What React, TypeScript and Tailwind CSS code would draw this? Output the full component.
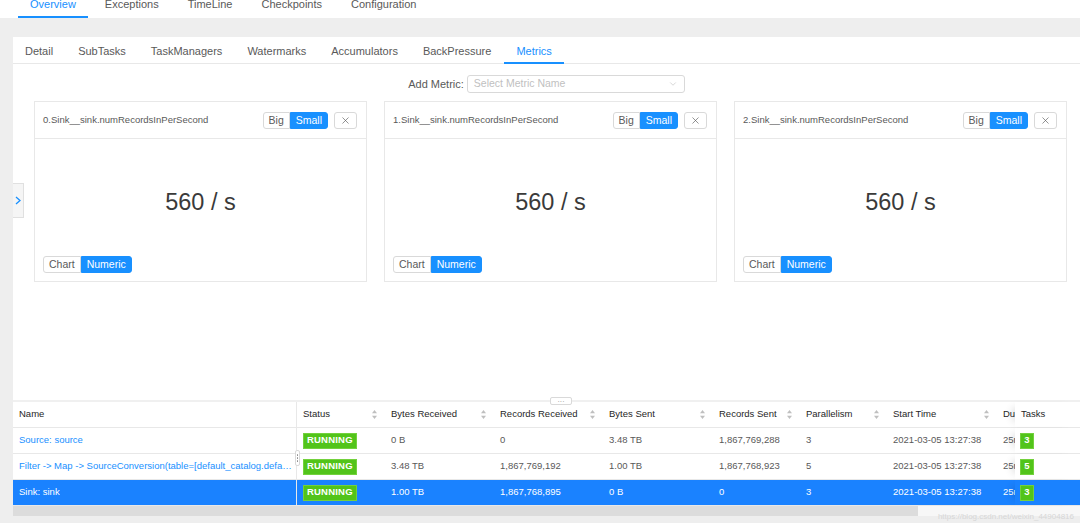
import { ChevronDown, X } from "lucide-react";

const mainTabs = ["Overview", "Exceptions", "TimeLine", "Checkpoints", "Configuration"];
const subTabs = ["Detail", "SubTasks", "TaskManagers", "Watermarks", "Accumulators", "BackPressure", "Metrics"];

const columns = [
  { label: "Name", w: "w-[284px] border-r border-[#e8e8e8]", sort: false },
  { label: "Status", w: "w-[88px]", sort: true },
  { label: "Bytes Received", w: "w-[109px]", sort: true },
  { label: "Records Received", w: "w-[109px]", sort: true },
  { label: "Bytes Sent", w: "w-[110px]", sort: true },
  { label: "Records Sent", w: "w-[87px]", sort: true },
  { label: "Parallelism", w: "w-[87px]", sort: true },
  { label: "Start Time", w: "w-[110px]", sort: true },
  { label: "Duration", w: "w-[18px]", sort: false },
];

const rows = [
  {
    name: "Source: source",
    cells: ["0 B", "0", "3.48 TB", "1,867,769,288", "3", "2021-03-05 13:27:38", "25m 37s"],
    tasks: 3,
  },
  {
    name: "Filter -> Map -> SourceConversion(table=[default_catalog.default_database.source], fields=[id, name])",
    cells: ["3.48 TB", "1,867,769,192", "1.00 TB", "1,867,768,923", "5", "2021-03-05 13:27:38", "25m 37s"],
    tasks: 5,
  },
  {
    name: "Sink: sink",
    cells: ["1.00 TB", "1,867,768,895", "0 B", "0", "3", "2021-03-05 13:27:38", "25m 37s"],
    tasks: 3,
    selected: true,
  },
];

function SortIcon() {
  return (
    <svg width="5" height="9" viewBox="0 0 5 9" className="shrink-0">
      <path d="M2.5 0 L5 3.2 L0 3.2 Z" fill="#bfbfbf" />
      <path d="M2.5 9 L5 5.8 L0 5.8 Z" fill="#bfbfbf" />
    </svg>
  );
}

function MetricCard({ index }: { index: number }) {
  return (
    <div className="w-[333px] h-[181px] border border-[#e8e8e8] flex flex-col">
      <div className="h-[37px] border-b border-[#e8e8e8] flex items-center justify-between pl-[8px] pr-[9px]">
        <span className="text-[9.5px] text-[#595959]">{index}.Sink__sink.numRecordsInPerSecond</span>
        <div className="flex items-center">
          <div className="h-[17px] px-[5px] border border-[#d9d9d9] rounded-l-[3px] text-[10.5px] leading-none flex items-center text-[#595959]">
            Big
          </div>
          <div className="h-[17px] px-[5px] border border-[#1890ff] bg-[#1890ff] rounded-r-[3px] text-[10.5px] leading-none flex items-center text-white">
            Small
          </div>
          <div className="ml-[6px] w-[23px] h-[17px] border border-[#d9d9d9] rounded-[3px] flex items-center justify-center text-[#595959]">
            <X size={11} strokeWidth={1.4} />
          </div>
        </div>
      </div>
      <div className="flex-1 flex flex-col">
        <div className="flex-1 pt-[10px] flex items-center justify-center text-[23.5px] text-[#3a3a3a]">560 / s</div>
        <div className="pl-[8px] pb-[8px] flex">
          <div className="h-[17px] px-[5px] border border-[#d9d9d9] rounded-l-[3px] text-[10.5px] leading-none flex items-center text-[#595959]">
            Chart
          </div>
          <div className="h-[17px] px-[5px] border border-[#1890ff] bg-[#1890ff] rounded-r-[3px] text-[10.5px] leading-none flex items-center text-white">
            Numeric
          </div>
        </div>
      </div>
    </div>
  );
}

export default function App() {
  return (
    <div className="relative w-[1080px] h-[523px] overflow-hidden bg-[#eeeeee] text-[#595959] font-['Liberation_Sans',Arial,sans-serif]">
      <div className="h-[18px] bg-white flex items-end pl-[18px] gap-[5px] overflow-hidden">
        {mainTabs.map((t, i) => (
          <div
            key={t}
            className={
              i === 0
                ? "px-3 pb-[5px] leading-[13px] text-[11px] border-b-2 border-[#1890ff] text-[#1890ff]"
                : "px-3 pb-[5px] leading-[13px] text-[11px] border-b-2 border-transparent text-[#595959]"
            }
          >
            {t}
          </div>
        ))}
      </div>
      <div className="h-[19px]" />
      <div className="pl-[13px]">
        <div className="bg-white flex flex-col">
          <div className="h-[27px] flex items-end border-b border-[#e8e8e8] gap-[1px]">
            {subTabs.map((t) => (
              <div
                key={t}
                className={
                  t === "Metrics"
                    ? "px-3 pb-[4px] -mb-px leading-[13px] text-[11px] border-b-2 border-[#1890ff] text-[#1890ff]"
                    : "px-3 pb-[4px] -mb-px leading-[13px] text-[11px] border-b-2 border-transparent text-[#595959]"
                }
              >
                {t}
              </div>
            ))}
          </div>

          <div className="h-[336px] relative">
            <div className="mt-[11px] flex justify-center items-center gap-[3px]">
              <span className="text-[11px] text-[#595959]">Add Metric:</span>
              <div className="w-[218px] h-[18px] border border-[#d9d9d9] rounded-[3px] px-[6px] flex items-center justify-between">
                <span className="text-[10.5px] text-[#bfbfbf]">Select Metric Name</span>
                <ChevronDown size={10} color="#bfbfbf" strokeWidth={1.5} />
              </div>
            </div>
            <div className="mt-[8px] flex gap-[17px] pl-[21px]">
              {[0, 1, 2].map((i) => (
                <MetricCard key={i} index={i} />
              ))}
            </div>
            <div className="absolute left-0 top-[119px] w-[11px] h-[35px] bg-[#f5f5f5] border border-l-0 border-[#e0e0e0] flex items-center justify-center">
              <svg width="6" height="9" viewBox="0 0 6 9">
                <path d="M1 1 L5 4.5 L1 8" fill="none" stroke="#1890ff" strokeWidth="1.3" />
              </svg>
            </div>
          </div>

          <div className="h-[2px] bg-[#f0f0f0] relative">
            <div className="absolute left-[537px] -top-[3px] w-[22px] h-[8px] bg-white border border-[#d9d9d9] rounded-[2px] flex items-center justify-center text-[7px] leading-none text-[#8c8c8c]">
              ···
            </div>
          </div>

          <div className="relative text-[9.5px]">
            <div className="h-[26px] flex border-b border-[#e8e8e8] text-[#262626]">
              {columns.map((c) => (
                <div
                  key={c.label}
                  className={`${c.w} shrink-0 h-full flex items-center justify-between pl-[6px] pr-[8px] overflow-hidden whitespace-nowrap`}
                >
                  <span>{c.label}</span>
                  {c.sort && <SortIcon />}
                </div>
              ))}
              <div className="w-[65px] shrink-0 h-full flex items-center pl-[6px] bg-white shadow-[-8px_0_8px_-6px_rgba(0,0,0,0.15)]">
                Tasks
              </div>
            </div>
            {rows.map((r) => (
              <div
                key={r.name}
                className={
                  r.selected
                    ? "h-[26px] flex border-b border-[#e8e8e8] bg-[#1a82ff] text-white"
                    : "h-[26px] flex border-b border-[#e8e8e8] bg-white text-[#595959]"
                }
              >
                <div
                  className={
                    r.selected
                      ? "w-[284px] shrink-0 h-full flex items-center pl-[6px] pr-[3px] border-r border-[#e8e8e8]"
                      : "w-[284px] shrink-0 h-full flex items-center pl-[6px] pr-[3px] border-r border-[#e8e8e8] text-[#1890ff]"
                  }
                >
                  <span className="truncate">{r.name}</span>
                </div>
                <div className="w-[88px] shrink-0 h-full flex items-center pl-[6px]">
                  <span className="h-[16px] px-[3px] bg-[#52c41a] border border-[#73d13d] text-white font-bold flex items-center tracking-[0.2px]">
                    RUNNING
                  </span>
                </div>
                {r.cells.map((v, j) => (
                  <div
                    key={j}
                    className={`${columns[j + 2].w} shrink-0 h-full flex items-center pl-[6px] overflow-hidden whitespace-nowrap`}
                  >
                    {v}
                  </div>
                ))}
                <div
                  className={
                    r.selected
                      ? "w-[65px] shrink-0 h-full flex items-center pl-[5px] bg-[#1a82ff] shadow-[-8px_0_8px_-6px_rgba(0,0,0,0.15)]"
                      : "w-[65px] shrink-0 h-full flex items-center pl-[5px] bg-white shadow-[-8px_0_8px_-6px_rgba(0,0,0,0.15)]"
                  }
                >
                  <span className="w-[14px] h-[16px] bg-[#52c41a] border border-[#73d13d] text-white font-bold flex items-center justify-center">
                    {r.tasks}
                  </span>
                </div>
              </div>
            ))}
            <div className="absolute left-[282px] top-[48px] w-[5px] h-[16px] bg-white border border-[#d9d9d9] rounded-[2px] flex flex-col items-center justify-center gap-[1.5px]">
              <span className="w-[1.5px] h-[1.5px] bg-[#8c8c8c] rounded-full" />
              <span className="w-[1.5px] h-[1.5px] bg-[#8c8c8c] rounded-full" />
              <span className="w-[1.5px] h-[1.5px] bg-[#8c8c8c] rounded-full" />
            </div>
          </div>

          <div className="h-[10px] flex">
            <div className="w-[905px] bg-[#dcdcdc]" />
            <div className="flex-1 bg-[#f7f7f7]" />
          </div>
        </div>
      </div>
      <div className="absolute right-[6px] bottom-[0px] text-[8px] text-[#d6d6d6]">https://blog.csdn.net/weixin_44904816</div>
    </div>
  );
}
